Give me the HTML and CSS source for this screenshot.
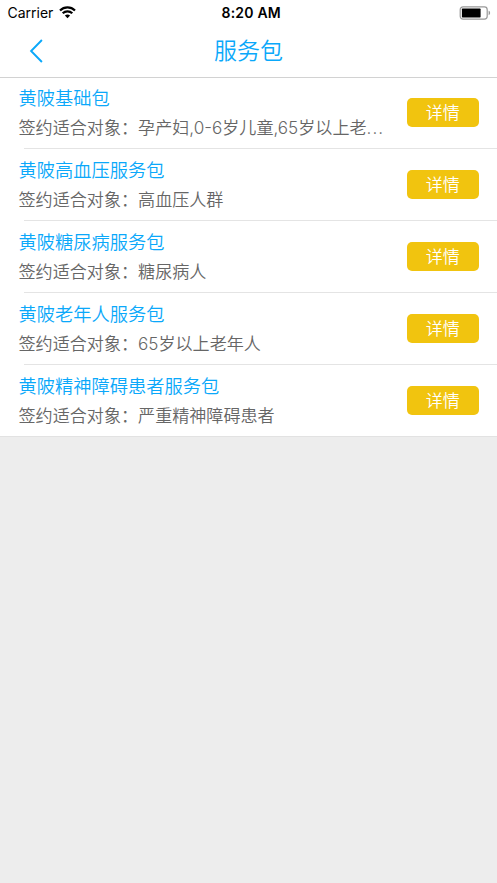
FILE: index.html
```html
<!DOCTYPE html>
<html lang="zh-CN">
<head>
<meta charset="utf-8">
<title>服务包</title>
<link rel="stylesheet" href="styles.css">
</head>
<body>
<header class="top">
  <div class="status">
    <div class="carrier"><span>Carrier</span>
      <svg class="wifi" width="17" height="13" viewBox="0 0 17 13" fill="none" stroke="#000" stroke-width="2.2"><path d="M1 4.5C5.2.4 11.8.4 16 4.5"/><path d="M3.7 7.3c2.7-2.6 6.9-2.6 9.6 0"/><path d="M5.9 9.5c1.5-1.4 3.7-1.4 5.2 0l-2.6 2.7z" fill="#000" stroke="none"/></svg>
    </div>
    <div class="time">8:20 AM</div>
    <svg class="battery" width="32" height="14" viewBox="0 0 32 14"><rect x="1.2" y=".9" width="27" height="12.2" rx="2.8" fill="#fff" stroke="#999" stroke-width="1.2"/><rect x="2.9" y="2.6" width="18.7" height="8.8" rx=".6"/><path d="M29.6 4.8c2 .6 2 3.8 0 4.4z" fill="#999"/></svg>
  </div>
  <nav class="nav">
    <svg class="back" width="14" height="24" viewBox="0 0 14 24" fill="none" stroke="#0aa8fa" stroke-width="1.9"><path d="M12.9 1 2.1 12l10.8 11"/></svg>
    <h1 class="heading">服务包</h1>
  </nav>
</header>
<main class="list">
  <section class="row"><div class="info"><h2 class="name">黄陂基础包</h2><p class="desc">签约适合对象：孕产妇,0-6岁儿童,65岁以上老<span class="dots">...</span></p></div><button class="detail">详情</button></section>
  <section class="row"><div class="info"><h2 class="name">黄陂高血压服务包</h2><p class="desc">签约适合对象：高血压人群</p></div><button class="detail">详情</button></section>
  <section class="row"><div class="info"><h2 class="name">黄陂糖尿病服务包</h2><p class="desc">签约适合对象：糖尿病人</p></div><button class="detail">详情</button></section>
  <section class="row"><div class="info"><h2 class="name">黄陂老年人服务包</h2><p class="desc">签约适合对象：65岁以上老年人</p></div><button class="detail">详情</button></section>
  <section class="row"><div class="info"><h2 class="name">黄陂精神障碍患者服务包</h2><p class="desc">签约适合对象：严重精神障碍患者</p></div><button class="detail">详情</button></section>
</main>
</body>
</html>
```
FILE: styles.css
```css
* { box-sizing: border-box; }
body {
  margin: 0;
  min-height: 883px;
  background: #ededed;
  font-family: Inter, "Noto Sans CJK SC", sans-serif;
  font-weight: 350;
}
h1, h2, p { margin: 0; font-weight: 350; }
.top {
  height: 78px;
  background: #fff;
  border-bottom: 1px solid #d2d2d2;
}
.status {
  display: grid;
  grid-template-columns: 1fr auto 1fr;
  align-items: center;
  height: 25px;
  padding: 0 6px 0 7.5px;
  color: #000;
  font-size: 14px;
  font-weight: 400;
}
.carrier { display: flex; align-items: center; gap: 6px; }
.time { padding-left: 4px; font-weight: 600; font-size: 14px; letter-spacing: .2px; }
.battery { justify-self: end; }
.nav {
  display: grid;
  grid-template-columns: 70px 1fr 70px;
  align-items: center;
  height: 51px;
}
.back { margin-left: 29px; }
.heading {
  color: #0aa8fa;
  font-size: 23px;
  line-height: 34px;
  text-align: center;
}
.list { background: #fff; border-bottom: 1px solid #e2e2e2; }
.row {
  display: flex;
  align-items: flex-start;
  justify-content: space-between;
  height: 72px;
  padding: 0 18px 0 18.5px;
  background: linear-gradient(#e4e4e4, #e4e4e4) 24px 70px / 100% 1px no-repeat;
}
.row:last-child { height: 70px; background: none; }
.info { display: flex; flex-direction: column; padding-top: 5px; }
.name {
  color: #0aa8fa;
  font-size: 18.25px;
  line-height: 30px;
}
.desc {
  color: #666;
  font-size: 17.08px;
  line-height: 30px;
  white-space: nowrap;
}
.dots { letter-spacing: 1px; }
.detail {
  width: 72.5px;
  height: 29px;
  margin-top: 20.4px;
  padding: 0;
  border: 0;
  border-radius: 5px;
  background: #f1c40f;
  color: #fff;
  font: 350 17px/28px Inter, "Noto Sans CJK SC", sans-serif;
}
```
